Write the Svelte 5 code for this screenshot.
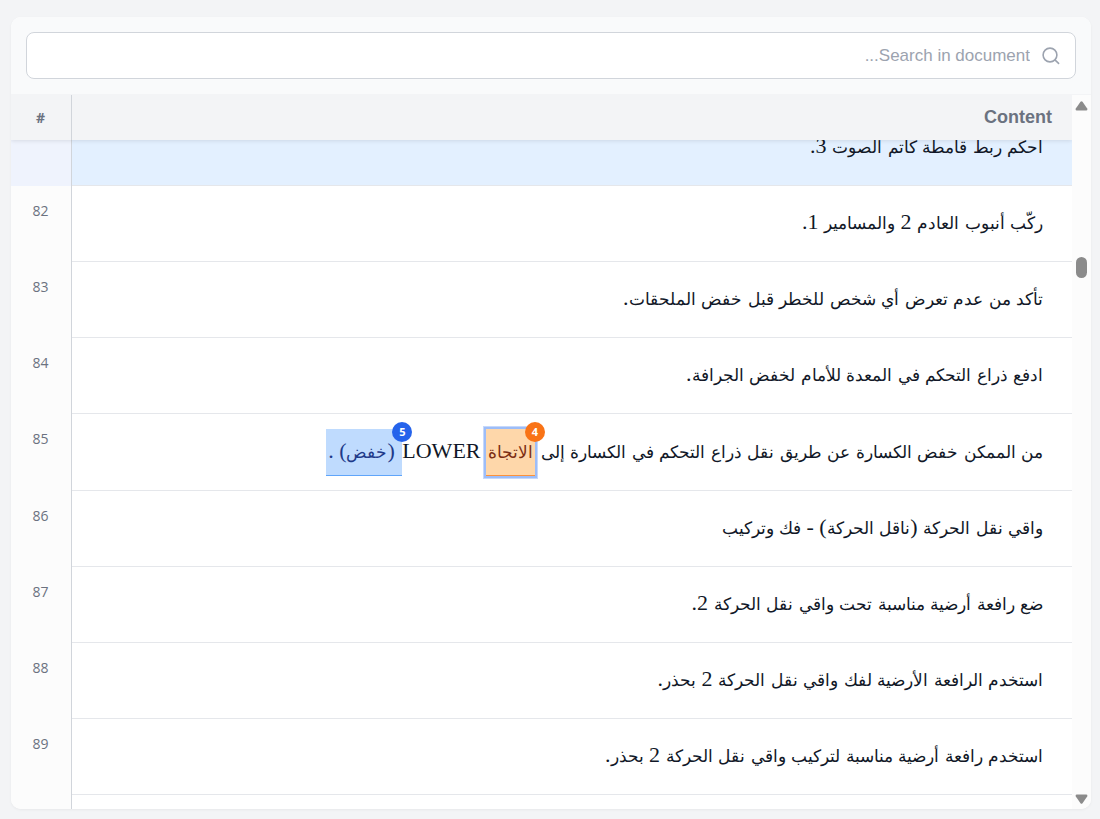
<script>
  import { onMount } from 'svelte';

  let query = $state('');
  let scroller;

  const rows = [
    { id: 81, marked: true, parts: [{ text: 'أحكم ربط قامطة كاتم الصوت 3.' }] },
    { id: 82, parts: [{ text: 'ركّب أنبوب العادم 2 والمسامير 1.' }] },
    { id: 83, parts: [{ text: 'تأكد من عدم تعرض أي شخص للخطر قبل خفض الملحقات.' }] },
    { id: 84, parts: [{ text: 'ادفع ذراع التحكم في المعدة للأمام لخفض الجرافة.' }] },
    {
      id: 85,
      parts: [
        { text: 'من الممكن خفض الكسارة عن طريق نقل ذراع التحكم في الكسارة إلى ' },
        { text: 'الاتجاة', tone: 'orange', badge: 4 },
        { text: ' LOWER' },
        { text: ' (خفض) .', tone: 'blue', badge: 5 }
      ]
    },
    { id: 86, parts: [{ text: 'واقي نقل الحركة (ناقل الحركة) - فك وتركيب' }] },
    { id: 87, parts: [{ text: 'ضع رافعة أرضية مناسبة تحت واقي نقل الحركة 2.' }] },
    { id: 88, parts: [{ text: 'استخدم الرافعة الأرضية لفك واقي نقل الحركة 2 بحذر.' }] },
    { id: 89, parts: [{ text: 'استخدم رافعة أرضية مناسبة لتركيب واقي نقل الحركة 2 بحذر.' }] },
    { id: '', parts: [] }
  ];

  // Splits a text into Arabic words and everything between them, so each script gets its own size.
  const runs = (text) =>
    text
      .split(/([\u0600-\u06ff]+)/)
      .filter(Boolean)
      .map((value) => ({ value, arabic: /[\u0600-\u06ff]/.test(value) }));

  onMount(() => {
    scroller.scrollTop = 30;
  });

  const step = (amount) => scroller.scrollBy({ top: amount });
</script>

{#snippet words(text)}{#each runs(text) as run}{#if run.arabic}<span class="arabic">{run.value}</span>{:else}{run.value}{/if}{/each}{/snippet}

<main>
  <section class="card">
    <div class="search">
      <label class="field" dir="rtl">
        <svg width="18" height="18" viewBox="0 0 18 18" fill="none" stroke="#9ca3af" stroke-width="1.6" stroke-linecap="round" aria-hidden="true">
          <circle cx="8" cy="8" r="6.9" />
          <path d="M13.2 13.2 16.6 16.4" />
        </svg>
        <input type="text" aria-label="Search in document" placeholder="Search in document..." bind:value={query} />
      </label>
    </div>

    <div class="body">
      <div class="scroller" bind:this={scroller}>
        <table>
          <thead>
            <tr>
              <th class="num">#</th>
              <th class="content">Content</th>
            </tr>
          </thead>
          <tbody>
            {#each rows as row (row.id)}
              <tr class:marked={row.marked} class:tagged={row.parts.some((part) => part.tone)}>
                <td class="num">{row.id}</td>
                <td class="content" dir="rtl">{#each row.parts as part}{#if part.tone}<span class="tag {part.tone}">{@render words(part.text)}<span class="badge">{part.badge}</span></span>{:else}{@render words(part.text)}{/if}{/each}</td>
              </tr>
            {/each}
          </tbody>
        </table>
      </div>
      <div class="bar">
        <button type="button" aria-label="Scroll up" onclick={() => step(-76)}>
          <svg width="13" height="12" viewBox="0 0 13 12" aria-hidden="true"><path d="M5.5 1.8Q6.5.6 7.5 1.8L12.2 8.4Q13 10.4 11.4 10.4H1.6Q0 10.4.8 8.4Z" fill="#8b8b8b" /></svg>
        </button>
        <div class="track"><div class="thumb"></div></div>
        <button type="button" aria-label="Scroll down" onclick={() => step(76)}>
          <svg width="13" height="12" viewBox="0 0 13 12" aria-hidden="true"><path d="M5.5 10.2Q6.5 11.4 7.5 10.2L12.2 3.6Q13 1.6 11.4 1.6H1.6Q0 1.6.8 3.6Z" fill="#8b8b8b" /></svg>
        </button>
      </div>
    </div>
  </section>
</main>

<style>
  :global(body) {
    margin: 0;
    background: #f3f4f6;
  }

  main {
    box-sizing: border-box;
    height: 100vh;
    padding: 17px 9px 10px 11px;
    font-family: "Liberation Sans", Arial, sans-serif;
  }

  .card {
    display: flex;
    flex-direction: column;
    height: 100%;
    overflow: hidden;
    border-radius: 10px;
    background: #fff;
    box-shadow: 0 1px 3px rgb(0 0 0 / 5%);
  }

  .search {
    padding: 15px;
    background: #f9fafb;
    border-bottom: 1px solid #f3f4f6;
  }

  .field {
    display: flex;
    align-items: center;
    gap: 12px;
    box-sizing: border-box;
    height: 47px;
    padding: 0 15px;
    border: 1px solid #d1d5db;
    border-radius: 8px;
    background: #fff;
  }

  .field svg {
    flex: none;
  }

  input {
    flex: 1;
    min-width: 0;
    padding: 0;
    border: 0;
    outline: 0;
    background: none;
    color: #111827;
    font: 17px/24px "Liberation Sans", Arial, sans-serif;
  }

  input::placeholder {
    color: #9ca3af;
    opacity: 1;
  }

  .body {
    display: flex;
    flex: 1;
    min-height: 0;
  }

  .scroller {
    flex: 1;
    overflow-y: auto;
    scrollbar-width: none;
  }

  table {
    width: 100%;
    table-layout: fixed;
    border-collapse: separate;
    border-spacing: 0;
  }

  thead {
    position: sticky;
    top: 0;
    z-index: 2;
    box-shadow: 0 1px 4px rgb(0 0 0 / 10%);
  }

  th {
    box-sizing: border-box;
    height: 45px;
    padding: 0 20px;
    background: #f3f4f6;
    color: #6b7280;
    font-size: 18px;
    font-weight: 700;
    text-align: right;
  }

  .num {
    box-sizing: border-box;
    width: 61px;
    padding: 0 1px 0 0;
    border-right: 1px solid #d1d5db;
    font-family: "Open Sans", sans-serif;
    font-size: 14px;
    text-align: center;
  }

  td {
    box-sizing: border-box;
    height: 76px;
  }

  td.num {
    padding-top: 15px;
    background: #fcfcfc;
    color: #6b7280;
    line-height: 20px;
    vertical-align: top;
  }

  td.content {
    padding: 0 29px 2px;
    border-bottom: 1px solid #e5e7eb;
    color: #111827;
    font-family: "Liberation Serif", "Times New Roman", serif;
    font-size: 22px;
    line-height: 40px;
    white-space: nowrap;
  }

  .tagged td.content {
    height: 77px;
    padding-bottom: 0;
  }

  .arabic {
    font-size: 17px;
  }

  .marked td.num {
    background: #eff3fd;
  }

  .marked td.content {
    background: #e3f0ff;
  }

  .tag {
    position: relative;
    display: inline-block;
    padding: 2px;
    white-space: pre;
  }

  .orange {
    border-bottom: 1px solid #fb923c;
    background: #fed7aa;
    color: #7c2d12;
    box-shadow: 0 0 0 2px #9dbdf8, 0 0 0 3px #c5d8fb;
  }

  .blue {
    border-bottom: 1px solid #60a5fa;
    background: #bfdbfe;
    color: #1e3a8a;
  }

  .badge {
    position: absolute;
    top: -7px;
    right: -10px;
    width: 20px;
    height: 20px;
    border-radius: 50%;
    background: #f97316;
    color: #fff;
    font: 700 11px/20px "Open Sans", sans-serif;
    text-align: center;
  }

  .blue .badge {
    background: #2563eb;
  }

  .bar {
    display: flex;
    flex-direction: column;
    align-items: center;
    width: 19px;
    padding: 5px 0 4px;
    box-sizing: border-box;
    background: #fcfcfc;
  }

  .bar button {
    display: flex;
    padding: 0;
    border: 0;
    background: none;
  }

  .track {
    flex: 1;
    padding-top: 145px;
  }

  .thumb {
    width: 11px;
    height: 21px;
    border-radius: 6px;
    background: #8b8b8b;
  }
</style>
